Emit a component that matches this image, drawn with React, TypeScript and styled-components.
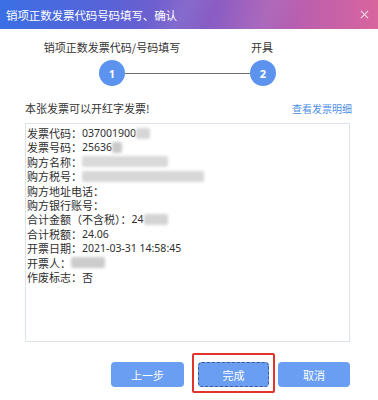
import React from "react";
import styled, { createGlobalStyle } from "styled-components";

const Global = createGlobalStyle`
  html, body { margin: 0; padding: 0; background: #ffffff; }
  body { font-family: "Noto Sans CJK SC", "Noto Sans", sans-serif; color: #333; }
`;

const Dialog = styled.div`
  width: 378px;
  height: 400px;
  background: #fff;
  display: flex;
  flex-direction: column;
  overflow: hidden;
`;

const Header = styled.div`
  height: 29px;
  flex: none;
  display: flex;
  align-items: center;
  justify-content: space-between;
  padding: 0 9px 0 6px;
  background:
    linear-gradient(115deg, rgba(255,255,255,0) 40%, rgba(255,255,255,0.08) 48%, rgba(255,255,255,0) 56%, rgba(255,255,255,0.07) 70%, rgba(255,255,255,0) 78%),
    linear-gradient(90deg, #3b6fe4 0%, #5a62d6 30%, #8d5cc2 58%, #bb5fae 80%, #d8659d 100%);
  box-sizing: border-box;
`;

const Title = styled.span`
  color: #fff;
  font-size: 11.5px;
  line-height: 16px;
  letter-spacing: -0.1px;
`;

const Close = styled.svg`
  width: 9px;
  height: 9px;
  display: block;
`;

const StepLabels = styled.div`
  display: grid;
  grid-template-columns: 150px 150px;
  margin: 10px 0 0 37px;
`;

const StepLabel = styled.div`
  text-align: center;
  font-size: 11px;
  line-height: 16px;
  color: #333;
`;

const Track = styled.div`
  display: flex;
  align-items: center;
  margin: 5px 0 0 99px;
  width: 177px;
`;

const Circle = styled.div`
  width: 26px;
  height: 26px;
  border-radius: 50%;
  background: #5b93ee;
  color: #fff;
  font-family: "Noto Sans", sans-serif;
  font-weight: 700;
  font-size: 11px;
  display: flex;
  align-items: center;
  justify-content: center;
  flex: none;
`;

const Line = styled.div`
  flex: 1;
  height: 1px;
  background: #6f6f6f;
`;

const Notice = styled.div`
  display: flex;
  justify-content: space-between;
  align-items: center;
  margin: 14px 26px 0 25px;
  height: 16px;
`;

const NoticeText = styled.span`
  font-size: 11px;
  color: #333;
`;

const Link = styled.a`
  font-size: 10px;
  color: #4d8ee6;
  text-decoration: none;
  cursor: pointer;
`;

const InfoBox = styled.div`
  margin: 7px 0 0 25px;
  width: 325px;
  height: 219px;
  box-sizing: border-box;
  border: 1px solid #dde3ea;
  padding: 2px 0 0 1px;
`;

const InfoLine = styled.div`
  font-size: 11px;
  line-height: 14.4px;
  height: 14.4px;
  color: #2e2e2e;
  white-space: nowrap;
  display: flex;
  align-items: center;
`;

const Value = styled.span`
  font-family: "Noto Sans", "Noto Sans CJK SC", sans-serif;
  font-size: 10.5px;
`;

const Blur = styled.span<{ $w: number; $tone?: string; $ml?: number }>`
  display: inline-block;
  width: ${(p) => p.$w}px;
  height: 11px;
  margin-left: ${(p) => p.$ml ?? 0}px;
  background: ${(p) => p.$tone ?? "#cfcfcf"};
  filter: blur(1.6px);
  border-radius: 2px;
`;

const Actions = styled.div`
  display: flex;
  justify-content: flex-end;
  align-items: center;
  margin: 20px 28px 0 0;
`;

const Button = styled.button<{ $w: number; $focus?: boolean }>`
  width: ${(p) => p.$w}px;
  height: 25px;
  border-radius: 4px;
  background: #6a9ef2;
  color: #fff;
  font-family: "Noto Sans CJK SC", sans-serif;
  font-size: 11px;
  border: ${(p) => (p.$focus ? "1px dashed #3f5a93" : "none")};
  padding: 0;
  cursor: pointer;
`;

const Highlight = styled.div`
  border: 2px solid #e3342b;
  border-radius: 2px;
  padding: 7px 4px 4px 4px;
  margin: -9px 3px -6px 2px;
  display: flex;
`;

const Gap = styled.div<{ $w: number }>`
  width: ${(p) => p.$w}px;
  flex: none;
`;

export default function App() {
  return (
    <>
      <Global />
      <Dialog>
        <Header>
          <Title>销项正数发票代码号码填写、确认</Title>
          <Close viewBox="0 0 10 10">
            <path d="M1 1 L9 9 M9 1 L1 9" stroke="#f6dbe9" strokeWidth="1.3" fill="none" />
          </Close>
        </Header>
        <StepLabels>
          <StepLabel>销项正数发票代码/号码填写</StepLabel>
          <StepLabel>开具</StepLabel>
        </StepLabels>
        <Track>
          <Circle>1</Circle>
          <Line />
          <Circle>2</Circle>
        </Track>
        <Notice>
          <NoticeText>本张发票可以开红字发票!</NoticeText>
          <Link>查看发票明细</Link>
        </Notice>
        <InfoBox>
          <InfoLine>发票代码：<Value>037001900</Value><Blur $w={14} $tone="#d6d6d6" /></InfoLine>
          <InfoLine>发票号码：<Value>25636</Value><Blur $w={10} $tone="#c9c9c9" /></InfoLine>
          <InfoLine>购方名称：<Blur $w={86} $tone="#d9d9d9" /></InfoLine>
          <InfoLine>购方税号：<Blur $w={122} $tone="#d7d7d7" /></InfoLine>
          <InfoLine>购方地址电话：</InfoLine>
          <InfoLine>购方银行账号：</InfoLine>
          <InfoLine>合计金额（不含税）：<Value>24</Value><Blur $w={24} $tone="#d4d4d4" /></InfoLine>
          <InfoLine>合计税额：<Value>24.06</Value></InfoLine>
          <InfoLine>开票日期：<Value>2021-03-31 14:58:45</Value></InfoLine>
          <InfoLine>开票人：<Blur $w={34} $tone="#cccccc" /></InfoLine>
          <InfoLine>作废标志：否</InfoLine>
        </InfoBox>
        <Actions>
          <Button $w={73}>上一步</Button>
          <Gap $w={6} />
          <Highlight>
            <Button $w={71} $focus>完成</Button>
          </Highlight>
          <Button $w={72}>取消</Button>
        </Actions>
      </Dialog>
    </>
  );
}
